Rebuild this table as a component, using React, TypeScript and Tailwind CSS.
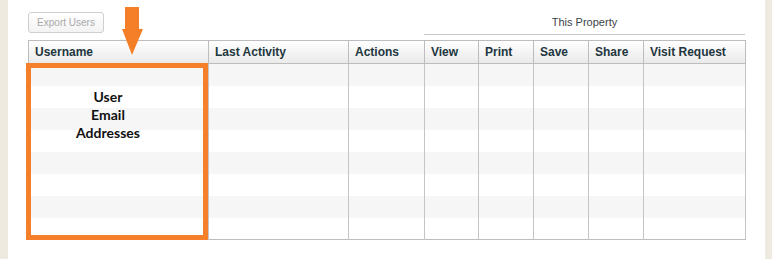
import React from 'react';

const columns: { label: string; width: string }[] = [
  { label: 'Username', width: 'w-[180px]' },
  { label: 'Last Activity', width: 'w-[140px]' },
  { label: 'Actions', width: 'w-[76px]' },
  { label: 'View', width: 'w-[54px]' },
  { label: 'Print', width: 'w-[55px]' },
  { label: 'Save', width: 'w-[55px]' },
  { label: 'Share', width: 'w-[55px]' },
  { label: 'Visit Request', width: 'w-[102px]' },
];

const rows = Array.from({ length: 8 }, (_, i) => i);

export default function App() {
  return (
    <div className="flex h-[259px] w-[772px] bg-white font-['Liberation_Sans',Arial,sans-serif]">
      <div className="w-[8px] shrink-0 bg-[#eeeadf]" />

      <div className="relative flex-1 pl-[20px]">
        {/* top bar */}
        <div className="flex h-[40px] w-[717px] items-start justify-between">
          <button
            disabled
            className="mt-[12px] h-[21px] w-[76px] rounded-[3px] border border-[#cfcfcf] bg-gradient-to-b from-white to-[#f3f3f3] text-[10px] text-[#a9a9a9]"
          >
            Export Users
          </button>
          <div className="mt-[13px] h-[22px] w-[321px] border-b border-[#c8c8c8] text-center text-[11px] leading-[18px] text-[#3b4449]">
            This Property
          </div>
        </div>

        {/* table */}
        <table className="w-[717px] table-fixed border-collapse border border-[#bdbdbd]">
          <thead>
            <tr className="h-[23px] bg-gradient-to-b from-white to-[#e9e9e9]">
              {columns.map((c) => (
                <th
                  key={c.label}
                  className={`${c.width} border border-[#bdbdbd] px-[6px] text-left text-[12px] font-bold text-[#223640]`}
                >
                  {c.label}
                </th>
              ))}
            </tr>
          </thead>
          <tbody>
            {rows.map((r) => (
              <tr key={r} className={r % 2 === 0 ? 'h-[22px] bg-[#f6f6f6]' : 'h-[22px] bg-white'}>
                {columns.map((c) => (
                  <td key={c.label} className="border-x border-[#c4c4c4]" />
                ))}
              </tr>
            ))}
          </tbody>
        </table>

        {/* annotation: arrow */}
        <svg className="absolute left-[113px] top-[6px]" width="24" height="50" viewBox="0 0 24 50">
          <path d="M4 1 H18 V23 H22 L11 49 L1 23 H4 Z" fill="#f57f28" />
        </svg>

        {/* annotation: highlight box */}
        <div className="absolute left-[18px] top-[63px] flex h-[177px] w-[182px] flex-col items-center border-[5px] border-[#f58029] pr-[18px] pt-[20px] font-['Lato',sans-serif] text-[14px] font-bold leading-[18px] text-[#111]">
          <span>User</span>
          <span>Email</span>
          <span>Addresses</span>
        </div>
      </div>

      <div className="w-[7px] shrink-0 bg-[#eeeadf]" />
    </div>
  );
}
